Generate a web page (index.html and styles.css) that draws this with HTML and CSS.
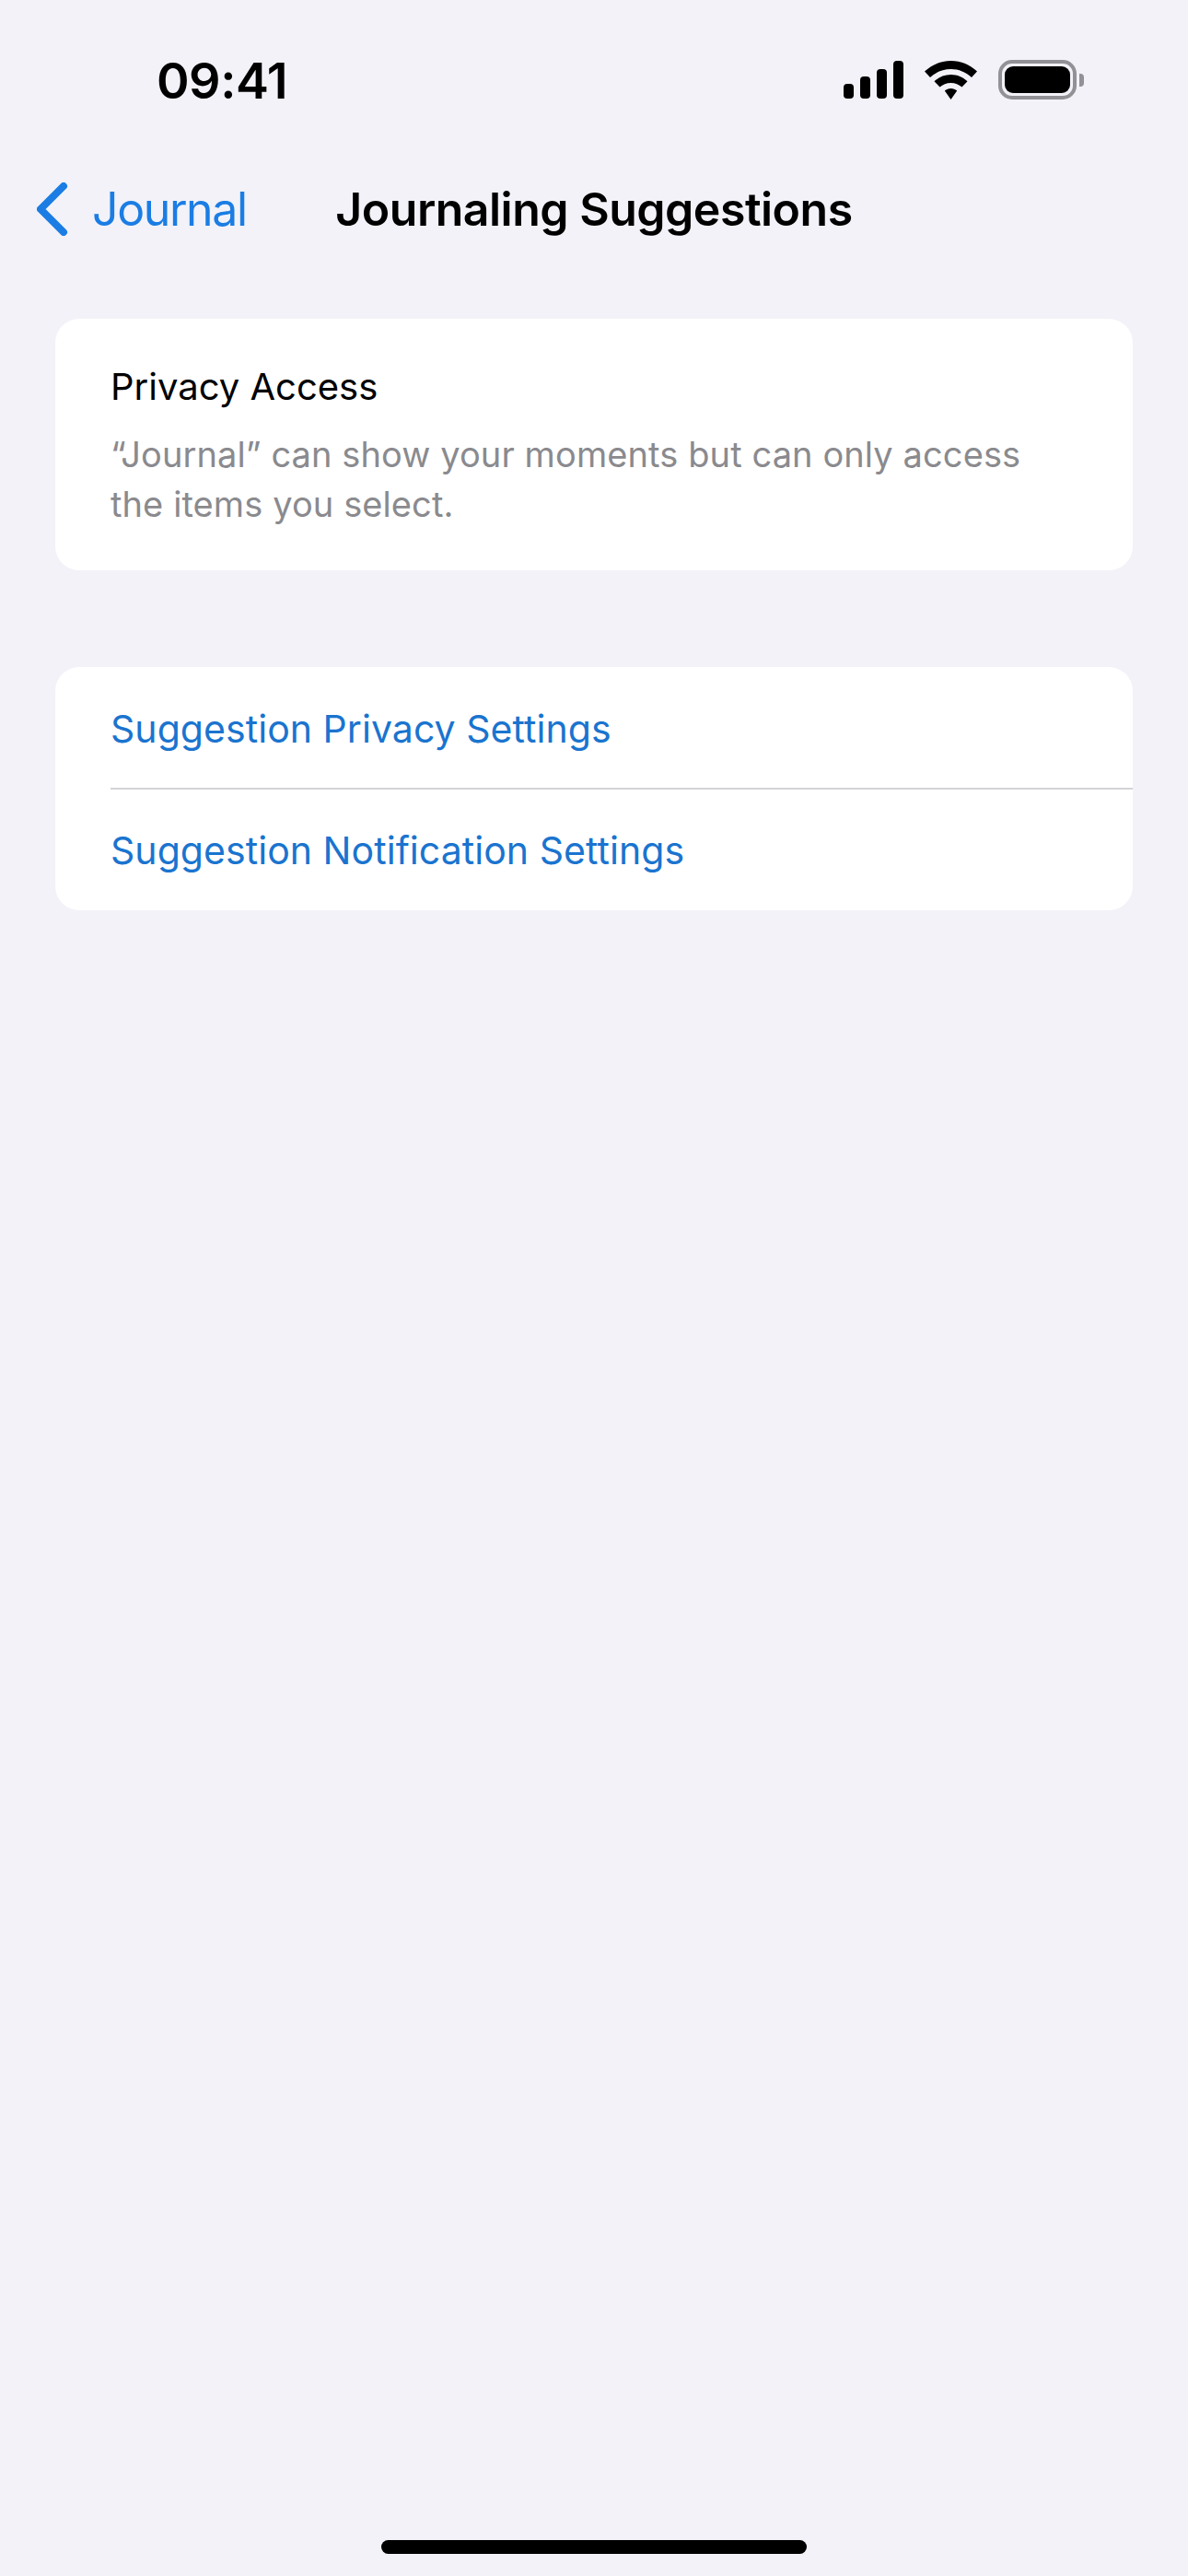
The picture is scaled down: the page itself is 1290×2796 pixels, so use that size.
FILE: index.html
```html
<!DOCTYPE html>
<html lang="en">

<head>
  <meta charset="UTF-8">
  <meta name="viewport" content="width=device-width, initial-scale=1.0">
  <title>Journaling Suggestions</title>
  <link rel="stylesheet" href="styles.css">
</head>

<body>
  <div class="screen">
    <div class="statusBar">
      <span class="time">09:41</span>
      <div class="statusIcons">
        <svg class="signal" width="65" height="41" viewBox="0 0 65 41">
          <rect x="0" y="25" width="11" height="16" rx="4" />
          <rect x="18" y="17" width="11" height="24" rx="4" />
          <rect x="36" y="9" width="11" height="32" rx="4" />
          <rect x="54" y="0" width="11" height="41" rx="4" />
        </svg>
        <svg class="wifi" width="57" height="42" viewBox="0 0 57 42">
          <path d="M28.5 0C39.5 0 49.5 4.3 57 11.5L51 18C45 12.4 37.2 9 28.5 9S12 12.4 6 18L0 11.5C7.5 4.3 17.500 0 28.500 0Z" />
          <path d="M28.500 15C35.500 15 41.800 17.800 46.500 22.200L40.500 28.600C37.300 25.700 33.100 24 28.500 24S19.700 25.700 16.500 28.600L10.500 22.200C15.200 17.800 21.500 15 28.500 15Z" />
          <path d="M28.500 30C31 30 33.400 31 35.200 32.600L28.500 42L21.800 32.600C23.600 31 26 30 28.500 30Z" />
        </svg>
        <div class="battery">
          <div class="batteryBody">
            <div class="batteryFill"></div>
          </div>
          <div class="batteryCap"></div>
        </div>
      </div>
    </div>

    <div class="navBar">
      <a class="backLink" href="#">
        <svg class="chevron" width="34" height="58" viewBox="0 0 34 58">
          <path d="M29 4L4 29L29 54" />
        </svg>
        <span>Journal</span>
      </a>
      <h1 class="navTitle">Journaling Suggestions</h1>
    </div>

    <div class="content">
      <section class="card infoCard">
        <h2 class="infoTitle">Privacy Access</h2>
        <p class="infoText">“Journal” can show your moments but can only access the items you select.</p>
      </section>

      <section class="card linkCard">
        <a class="linkRow" href="#">Suggestion Privacy Settings</a>
        <a class="linkRow" href="#">Suggestion Notification Settings</a>
      </section>
    </div>

    <div class="homeBar"></div>
  </div>
</body>

</html>
```

FILE: styles.css
```css
* {
  margin: 0;
  padding: 0;
  box-sizing: border-box;
  text-decoration: none;
}

body {
  background: #f2f2f8;
  font-family: Inter, "Liberation Sans", sans-serif;
  color: #000;
}

.screen {
  display: flex;
  flex-direction: column;
  height: 2796px;
}

/* status bar */
.statusBar {
  display: flex;
  justify-content: space-between;
  align-items: center;
  height: 65px;
  margin-top: 55px;
  padding: 0 113px 0 170px;
}

.time {
  font-size: 54px;
  font-weight: 600;
  line-height: 65px;
  letter-spacing: -0.5px;
}

.statusIcons {
  display: flex;
  align-items: center;
  gap: 23px;
  margin-bottom: 2px;
}

.battery {
  display: flex;
  align-items: center;
  gap: 3px;
}

.batteryBody {
  width: 85px;
  height: 43px;
  padding: 3px;
  border: 4px solid #919196;
  border-radius: 15px;
}

.batteryFill {
  width: 100%;
  height: 100%;
  background: #000;
  border-radius: 9px;
}

.batteryCap {
  width: 5px;
  height: 14px;
  background: #919196;
  border-radius: 0 4px 4px 0;
}

/* nav */
.navBar {
  position: relative;
  display: flex;
  justify-content: center;
  align-items: center;
  height: 72px;
  margin-top: 71px;
}

.backLink {
  position: absolute;
  left: 40px;
  top: 0;
  display: flex;
  align-items: center;
  gap: 26px;
  height: 72px;
  color: #1b7de4;
  font-size: 50px;
  letter-spacing: -1.4px;
}

.chevron {
  fill: none;
  stroke: #1b7de4;
  stroke-width: 8;
  stroke-linecap: round;
  stroke-linejoin: round;
}

.navTitle {
  font-size: 50px;
  font-weight: 600;
  letter-spacing: -0.5px;
}

/* cards */
.content {
  display: flex;
  flex-direction: column;
  gap: 105px;
  padding: 0 60px;
  margin-top: 83px;
}

.card {
  background: #fff;
  border-radius: 26px;
}

.infoCard {
  height: 273px;
  padding: 49px 60px 0;
}

.infoTitle {
  font-size: 40px;
  font-weight: 400;
  line-height: 50px;
}

.infoText {
  margin-top: 21px;
  font-size: 38px;
  line-height: 54px;
  letter-spacing: 0.1px;
  color: #8a8a8e;
}

.linkCard {
  display: flex;
  flex-direction: column;
  height: 264px;
  padding-left: 60px;
  overflow: hidden;
}

.linkRow {
  display: flex;
  align-items: center;
  height: 131px;
  padding-top: 3px;
  font-size: 41px;
  letter-spacing: 0.05px;
  color: #1a74cf;
}

.linkRow + .linkRow {
  height: 133px;
  padding-top: 1px;
  border-top: 2px solid #d4d4d8;
}

/* home indicator */
.homeBar {
  width: 462px;
  height: 15px;
  margin: auto auto 24px;
  background: #000;
  border-radius: 8px;
}
```
